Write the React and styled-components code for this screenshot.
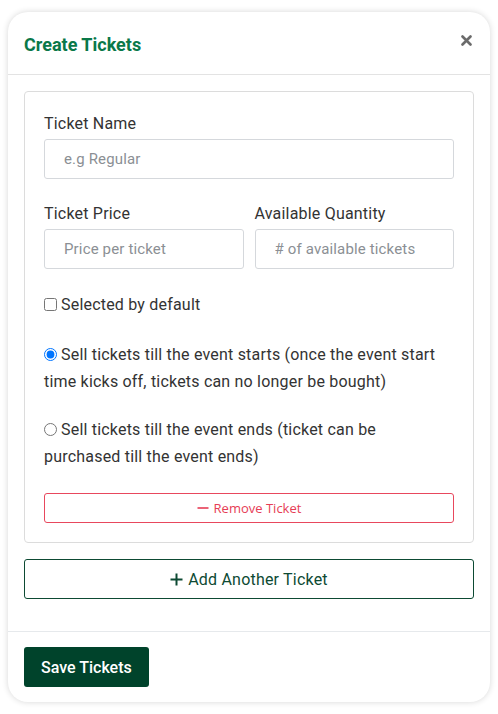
import React, { useState } from "react";
import styled, { createGlobalStyle } from "styled-components";

const GlobalStyle = createGlobalStyle`
  body {
    margin: 0;
    background: #fff;
    font-family: Roboto, "Liberation Sans", sans-serif;
    color: #333;
  }
  * { box-sizing: border-box; }
`;

const Page = styled.div`
  padding: 12px 8px;
`;

const Modal = styled.div`
  width: 482px;
  height: 690px;
  background: #fff;
  border-radius: 20px;
  box-shadow: 0 0 6px rgba(0, 0, 0, 0.16);
  display: flex;
  flex-direction: column;
  overflow: hidden;
`;

const Header = styled.div`
  height: 63px;
  padding: 0 16px;
  display: flex;
  align-items: center;
  justify-content: space-between;
  border-bottom: 1px solid #e3e3e3;
`;

const Title = styled.h2`
  margin: 0;
  font-size: 18px;
  font-weight: 700;
  color: #0a7849;
  padding-top: 2px;
`;

const Close = styled.button`
  border: 0;
  background: none;
  padding: 0;
  margin-top: -6px;
  margin-right: 2px;
  display: flex;
  cursor: pointer;
`;

const Body = styled.div`
  padding: 16px 16px 32px;
  border-bottom: 1px solid #e6e9ec;
`;

const Card = styled.div`
  border: 1px solid #dcdcdc;
  border-radius: 4px;
  padding: 20px 19px 19px;
`;

const Field = styled.div`
  display: flex;
  flex-direction: column;
  flex: 1;
`;

const Label = styled.label`
  font-size: 16px;
  line-height: 24px;
  letter-spacing: 0.2px;
  color: #333;
  margin-bottom: 3px;
`;

const Input = styled.input`
  height: 40px;
  width: 100%;
  border: 1px solid #d5d8dc;
  border-radius: 3px;
  padding: 0 19px;
  font-family: Roboto, "Liberation Sans", sans-serif;
  font-size: 15px;
  letter-spacing: 0.15px;
  color: #333;
  outline: none;
  &::placeholder { color: #8b8f94; }
`;

const Row = styled.div`
  display: flex;
  gap: 11px;
  margin-top: ${({ $top }) => $top || 0}px;
`;

const Option = styled.label`
  display: block;
  font-size: 16px;
  line-height: 27px;
  letter-spacing: 0.2px;
  color: #333;
  margin-top: ${({ $top }) => $top}px;
  input {
    margin: 0 4px 0 0;
    vertical-align: -1px;
  }
`;

const RemoveButton = styled.button`
  width: 100%;
  height: 30px;
  margin-top: 23px;
  background: #fff;
  border: 1px solid #e8475d;
  border-radius: 3px;
  color: #e63d55;
  font-family: "Open Sans", sans-serif;
  font-size: 13px;
  display: flex;
  align-items: center;
  justify-content: center;
  gap: 5px;
  cursor: pointer;
`;

const AddButton = styled.button`
  width: 100%;
  height: 40px;
  margin-top: 16px;
  background: #fff;
  border: 1px solid #0d4a33;
  border-radius: 3px;
  color: #0d4a33;
  font-family: Roboto, "Liberation Sans", sans-serif;
  font-size: 16px;
  font-weight: 400;
  letter-spacing: 0.2px;
  display: flex;
  align-items: center;
  justify-content: center;
  gap: 5px;
  cursor: pointer;
`;

const Footer = styled.div`
  padding: 15px 16px;
`;

const SaveButton = styled.button`
  height: 40px;
  padding: 0 17px;
  background: #00432b;
  border: 0;
  border-radius: 3px;
  color: #fff;
  font-family: Roboto, "Liberation Sans", sans-serif;
  font-size: 16px;
  font-weight: 500;
  cursor: pointer;
`;

export default function App() {
  const [mode, setMode] = useState("starts");

  return (
    <Page>
      <GlobalStyle />
      <Modal>
        <Header>
          <Title>Create Tickets</Title>
          <Close aria-label="close">
            <svg width="11" height="11" viewBox="0 0 11 11">
              <path d="M1.5 1.5 L9.5 9.5 M9.5 1.5 L1.5 9.5" stroke="#6b6b6b" strokeWidth="2.6" strokeLinecap="round" />
            </svg>
          </Close>
        </Header>
        <Body>
          <Card>
            <Field>
              <Label>Ticket Name</Label>
              <Input placeholder="e.g Regular" />
            </Field>
            <Row $top={23}>
              <Field>
                <Label>Ticket Price</Label>
                <Input placeholder="Price per ticket" />
              </Field>
              <Field>
                <Label>Available Quantity</Label>
                <Input placeholder="# of available tickets" />
              </Field>
            </Row>
            <Option $top={22}>
              <input type="checkbox" />Selected by default
            </Option>
            <Option $top={23}>
              <input
                type="radio"
                name="sell"
                checked={mode === "starts"}
                onChange={() => setMode("starts")}
              />
              Sell tickets till the event starts (once the event start time kicks off, tickets can no longer be bought)
            </Option>
            <Option $top={21}>
              <input
                type="radio"
                name="sell"
                checked={mode === "ends"}
                onChange={() => setMode("ends")}
              />
              Sell tickets till the event ends (ticket can be purchased till the event ends)
            </Option>
            <RemoveButton>
              <svg width="12" height="12" viewBox="0 0 12 12">
                <path d="M0.5 6 H11.5" stroke="#e63d55" strokeWidth="1.6" />
              </svg>
              Remove Ticket
            </RemoveButton>
          </Card>
          <AddButton>
            <svg width="13" height="13" viewBox="0 0 13 13">
              <path d="M6.5 0.5 V12.5 M0.5 6.5 H12.5" stroke="#0d4a33" strokeWidth="2" />
            </svg>
            Add Another Ticket
          </AddButton>
        </Body>
        <Footer>
          <SaveButton>Save Tickets</SaveButton>
        </Footer>
      </Modal>
    </Page>
  );
}
